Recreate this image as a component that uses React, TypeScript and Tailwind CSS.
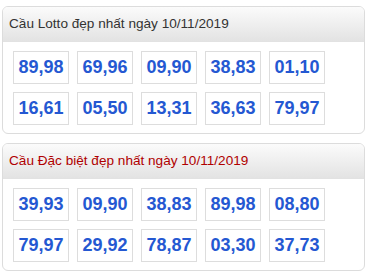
import React from "react";

const cards = [
  {
    title: "Cầu Lotto đẹp nhất ngày 10/11/2019",
    color: "text-[#333333]",
    rows: [
      ["89,98", "69,96", "09,90", "38,83", "01,10"],
      ["16,61", "05,50", "13,31", "36,63", "79,97"],
    ],
  },
  {
    title: "Cầu Đặc biệt đẹp nhất ngày 10/11/2019",
    color: "text-[#b00000]",
    rows: [
      ["39,93", "09,90", "38,83", "89,98", "08,80"],
      ["79,97", "29,92", "78,87", "03,30", "37,73"],
    ],
  },
];

export default function App() {
  return (
    <div
      className="w-[371px] h-[279px] bg-white pl-[2px] pt-[6px] flex flex-col gap-[9px]"
      style={{ fontFamily: '"Liberation Sans", Arial, sans-serif' }}
    >
      {cards.map((c, i) => (
        <div
          key={i}
          className="w-[363px] border border-[#dcdcdc] rounded-[6px] overflow-hidden bg-white"
        >
          <div
            className={`h-[35px] flex items-center pl-[6px] text-[13.6px] border-b border-[#e2e2e2] bg-gradient-to-b from-[#fbfbfb] to-[#e3e3e3] ${c.color}`}
          >
            {c.title}
          </div>
          <div className="pl-[10px] pt-[9px] pb-[8px] flex flex-col gap-[8px]">
            {c.rows.map((r, j) => (
              <div key={j} className="flex gap-[8px]">
                {r.map((n, k) => (
                  <div
                    key={k}
                    className="w-[56px] h-[33px] border border-[#dddddd] flex items-center justify-center text-[18px] font-bold text-[#2458d2]"
                  >
                    {n}
                  </div>
                ))}
              </div>
            ))}
          </div>
        </div>
      ))}
    </div>
  );
}
